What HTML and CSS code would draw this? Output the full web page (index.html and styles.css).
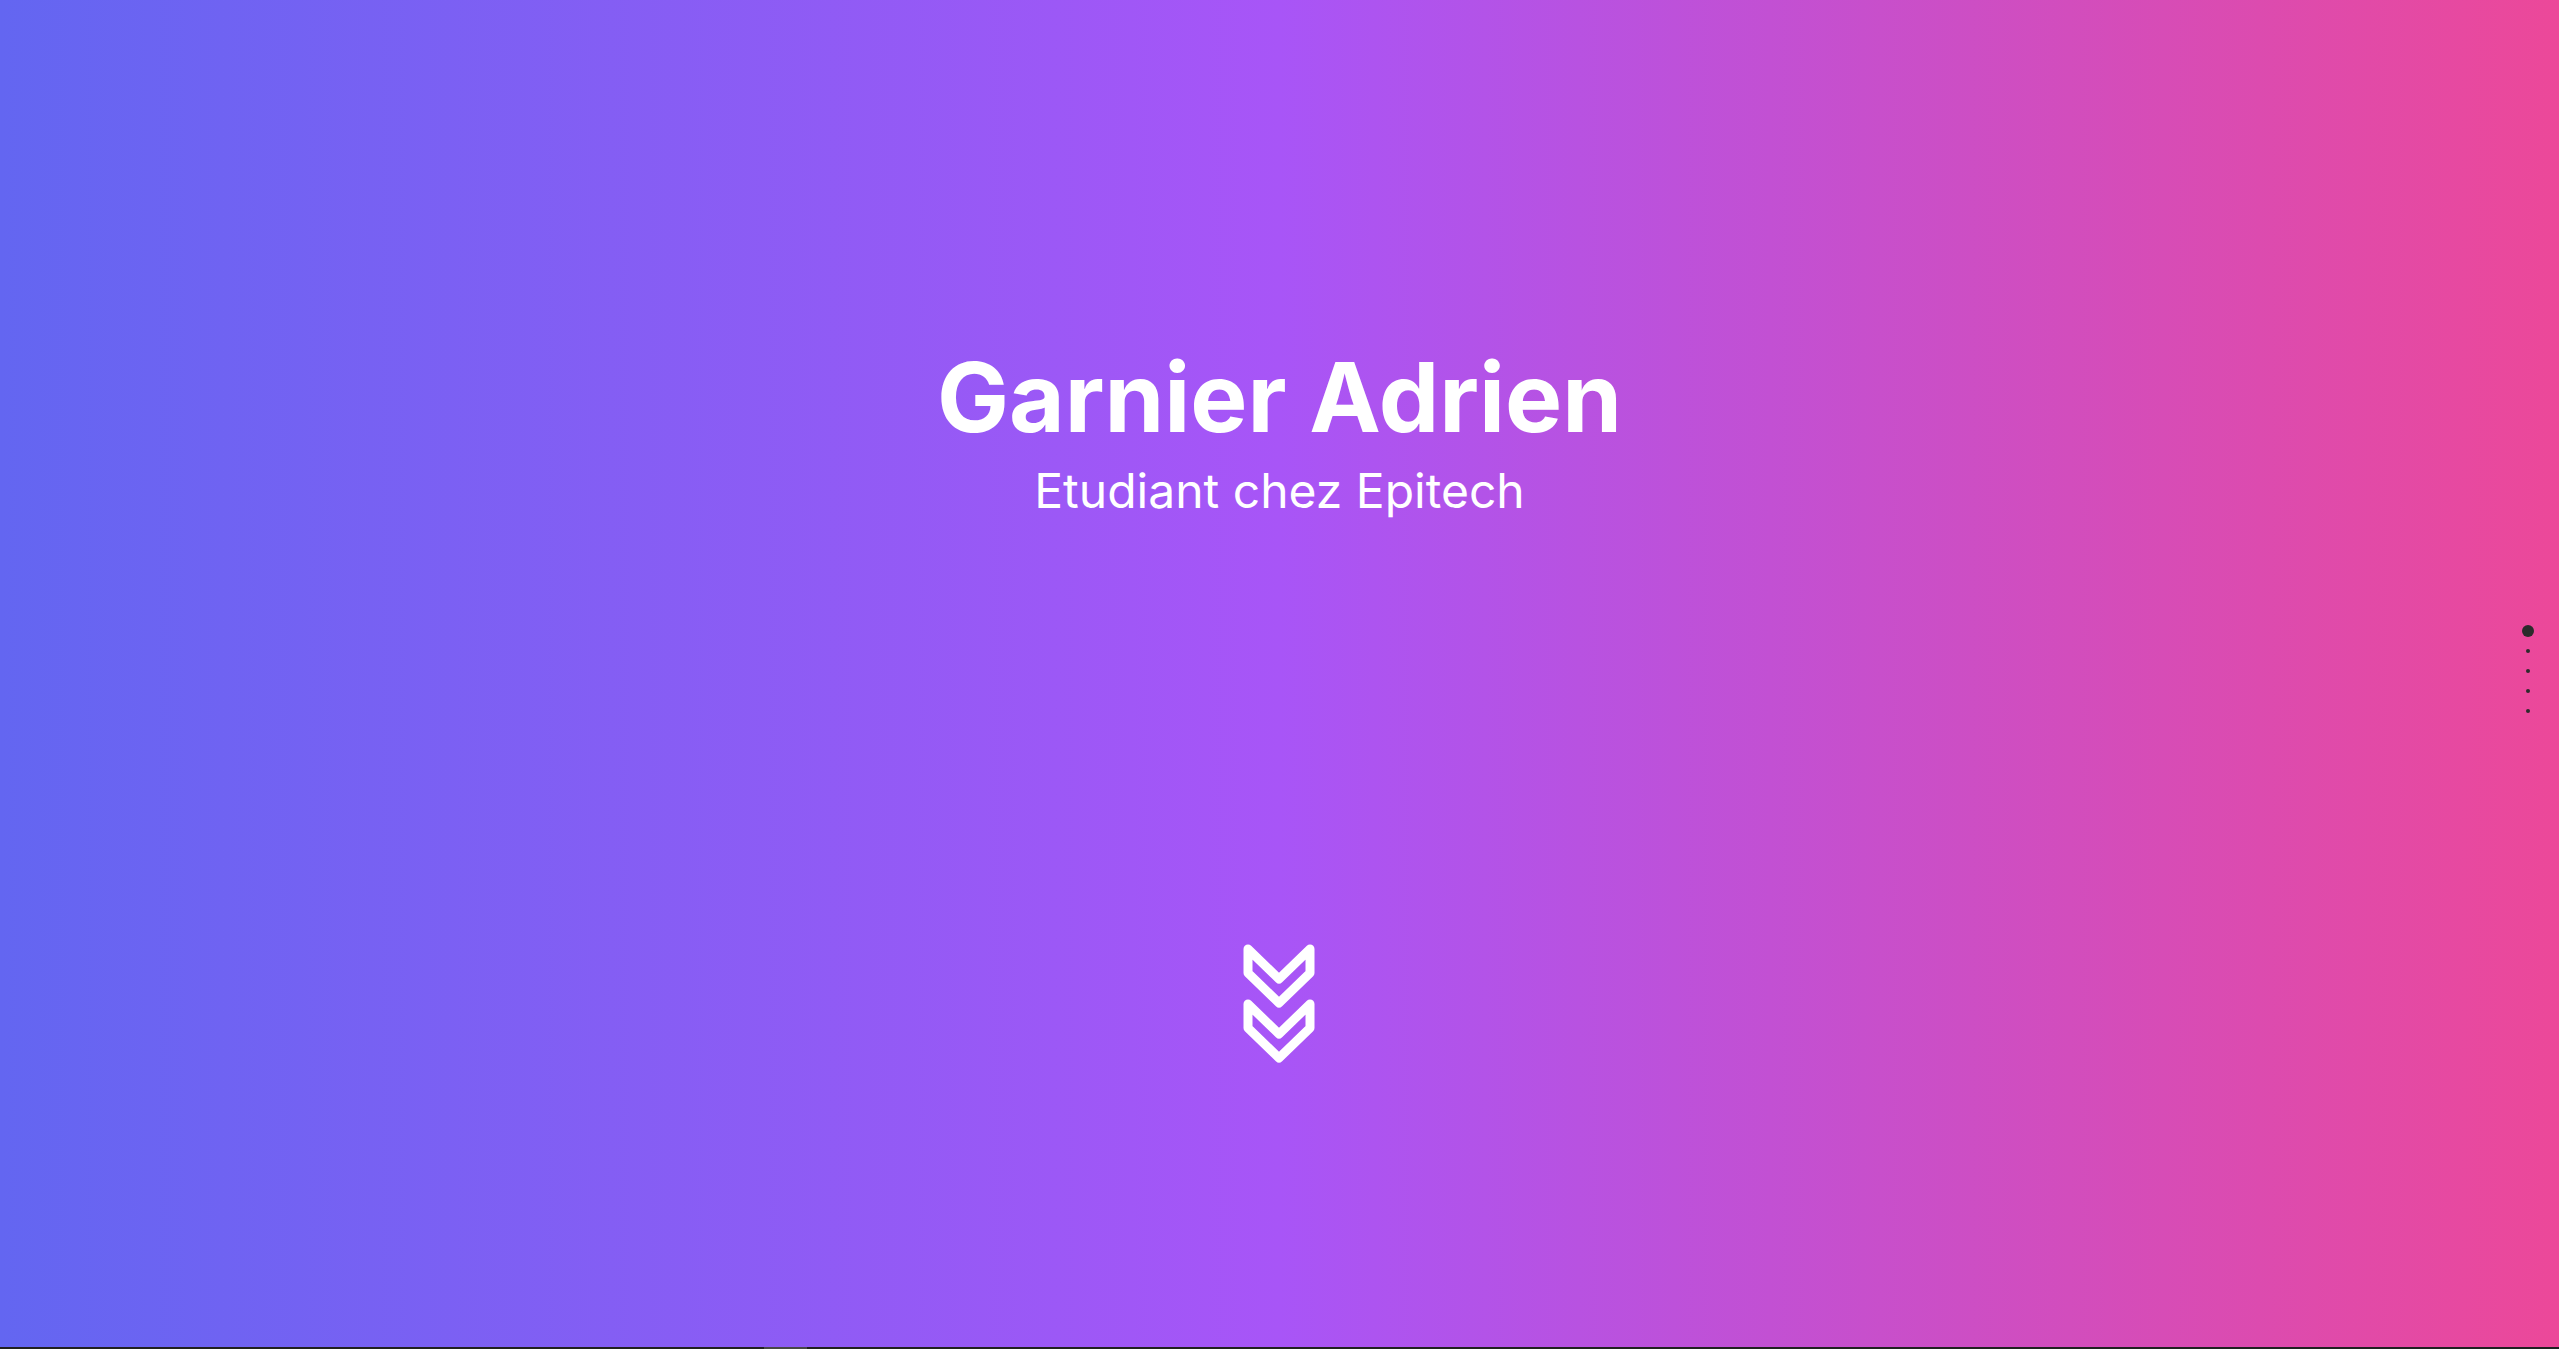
FILE: index.html
```html
<!DOCTYPE html>
<html lang="fr">
<head>
<meta charset="utf-8">
<title>Garnier Adrien</title>
<link rel="stylesheet" href="styles.css">
</head>
<body>
<section class="hero">
  <h1 class="hero-title">Garnier Adrien</h1>
  <p class="hero-subtitle">Etudiant chez Epitech</p>
  <a class="scroll-down" href="#next" aria-label="Défiler vers le bas">
    <svg width="72" height="122" viewBox="0 0 72 122" fill="none" stroke="#fff" stroke-width="9" stroke-linejoin="round" stroke-linecap="round">
      <path d="M5 5 L36 35 L67 5 L67 29 L36 59 L5 29 Z"/>
      <path d="M5 60 L36 90 L67 60 L67 84 L36 114 L5 84 Z"/>
    </svg>
  </a>
</section>
<section class="next" id="next">
  <div class="next-bar"></div>
</section>
<nav class="dots">
  <span class="dot-item"><span class="dot dot-active"></span></span>
  <span class="dot-item"><span class="dot"></span></span>
  <span class="dot-item"><span class="dot"></span></span>
  <span class="dot-item"><span class="dot"></span></span>
  <span class="dot-item"><span class="dot"></span></span>
</nav>
</body>
</html>
```
FILE: styles.css
```css
* { box-sizing: border-box; }
html, body { margin: 0; padding: 0; }
body {
  font-family: Inter, "Noto Sans", "Liberation Sans", sans-serif;
  background: #202020;
  color: #fff;
  overflow: hidden;
}
.hero {
  height: calc(100vh - 2px);
  background: linear-gradient(90deg, #6366f1 0%, #a855f7 50%, #ec4899 100%);
  display: flex;
  flex-direction: column;
  align-items: center;
  padding-top: 349px;
}
.hero-title {
  margin: 0;
  font-size: 96px;
  line-height: 1;
  font-weight: 700;
}
.hero-subtitle {
  margin: 22px 0 0;
  font-size: 48px;
  line-height: 1;
  font-weight: 400;
}
.scroll-down {
  display: block;
  margin-top: 429px;
  margin-left: -1px;
  line-height: 0;
}
.next {
  height: 2px;
  background: #202020;
}
.next-bar {
  margin-left: 764px;
  width: 43px;
  height: 2px;
  background: #474747;
}
.dots {
  position: fixed;
  right: 21px;
  top: 621px;
  display: flex;
  flex-direction: column;
  align-items: center;
}
.dot-item {
  width: 20px;
  height: 20px;
  display: flex;
  align-items: center;
  justify-content: center;
}
.dot {
  width: 4px;
  height: 4px;
  border-radius: 50%;
  background: #2b2b2b;
}
.dot-active {
  width: 12px;
  height: 12px;
}
```
